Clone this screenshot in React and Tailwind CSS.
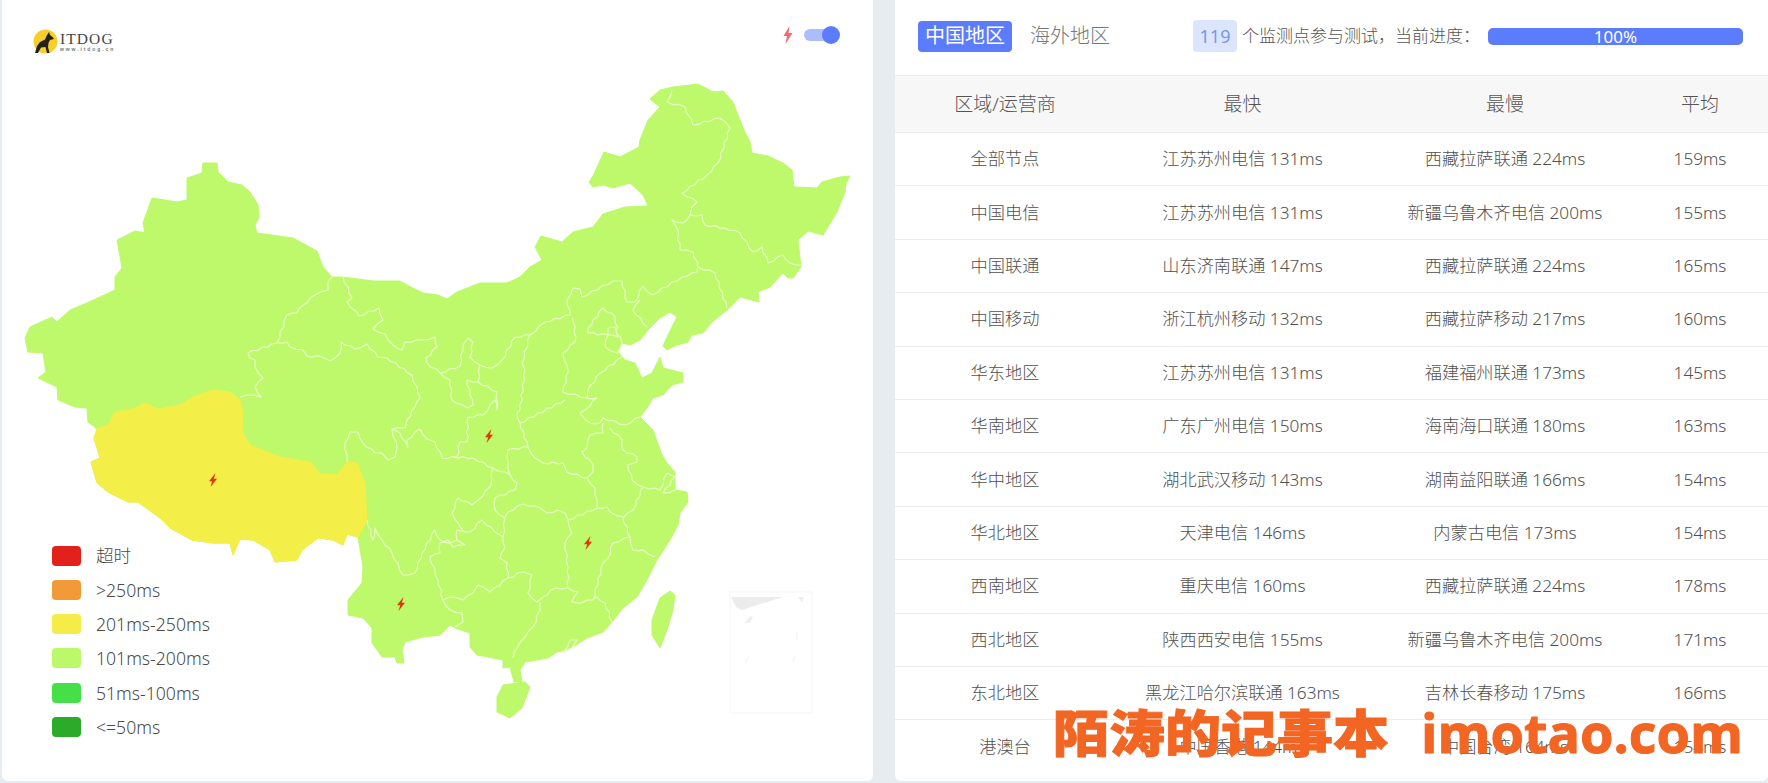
import React from "react";

const LEGEND = [
  { label: "超时", color: "bg-[#e3211c]" },
  { label: ">250ms", color: "bg-[#f39a38]" },
  { label: "201ms-250ms", color: "bg-[#f5ec48]" },
  { label: "101ms-200ms", color: "bg-[#bcf96a]" },
  { label: "51ms-100ms", color: "bg-[#45e047]" },
  { label: "<=50ms", color: "bg-[#2cab2a]" },
];

const ROWS = [
  ["全部节点", "江苏苏州电信 131ms", "西藏拉萨联通 224ms", "159ms"],
  ["中国电信", "江苏苏州电信 131ms", "新疆乌鲁木齐电信 200ms", "155ms"],
  ["中国联通", "山东济南联通 147ms", "西藏拉萨联通 224ms", "165ms"],
  ["中国移动", "浙江杭州移动 132ms", "西藏拉萨移动 217ms", "160ms"],
  ["华东地区", "江苏苏州电信 131ms", "福建福州联通 173ms", "145ms"],
  ["华南地区", "广东广州电信 150ms", "海南海口联通 180ms", "163ms"],
  ["华中地区", "湖北武汉移动 143ms", "湖南益阳联通 166ms", "154ms"],
  ["华北地区", "天津电信 146ms", "内蒙古电信 173ms", "154ms"],
  ["西南地区", "重庆电信 160ms", "西藏拉萨联通 224ms", "178ms"],
  ["西北地区", "陕西西安电信 155ms", "新疆乌鲁木齐电信 200ms", "171ms"],
  ["东北地区", "黑龙江哈尔滨联通 163ms", "吉林长春移动 175ms", "166ms"],
  ["港澳台", "中国香港 144ms", "中国台湾 164ms", "154ms"],
];

// mainland outline, clockwise from the top of Xinjiang
const MAINLAND =
  "203,163 217,163 218,172 228,182 242,185 250,192 258,205 259,218 255,225 257,233 293,238 317,251 323,267 332,277 343,277 373,281 400,281 407,285 423,293 438,295 447,299 457,292 480,283 507,283 520,277 530,267 542,260 535,247 541,236 562,242 573,232 593,227 603,214 625,207 648,206 643,195 630,183 613,188 603,185 593,187 589,182 593,176 604,152 620,157 639,147 640,140 648,120 660,107 650,99 660,90 673,87 698,84 713,92 723,91 733,102 743,128 750,142 752,153 768,156 783,163 792,170 794,187 817,188 822,182 840,177 850,176 846,183 845,192 837,212 823,235 808,231 798,240 801,267 793,278 788,278 783,273 770,287 758,292 759,302 740,297 727,310 712,322 703,333 692,335 688,342 677,345 667,350 663,346 667,337 677,317 670,312 660,318 648,330 640,340 630,345 622,343 618,352 625,360 635,363 642,378 652,373 660,357 663,368 683,373 683,382 672,385 663,395 653,398 647,408 640,417 653,430 662,455 667,463 675,472 675,490 687,492 688,502 680,513 678,525 670,540 657,560 647,580 637,597 623,608 612,622 603,632 587,638 568,650 557,652 548,658 525,662 520,670 522,682 514,682 510,667 503,668 503,660 477,655 470,647 470,633 455,628 450,625 440,635 423,637 405,642 402,650 404,663 397,663 395,657 382,657 372,643 372,628 363,618 348,615 348,600 362,583 363,567 358,537 347,534 343,545 333,540 318,538 302,550 297,560 275,562 270,550 253,540 240,539 233,555 230,543 213,543 192,540 170,528 160,518 138,502 128,502 108,492 97,483 91,462 100,458 94,438 97,429 88,422 87,408 75,407 58,400 57,387 38,378 46,372 43,353 28,352 25,338 30,327 52,317 57,322 70,310 87,303 115,290 115,277 122,268 117,240 135,231 145,233 143,223 152,198 177,202 187,200 187,178 202,173";

const XIZANG =
  "358,537 347,534 343,545 333,540 318,538 302,550 297,560 275,562 270,550 253,540 240,539 233,555 230,543 213,543 192,540 170,528 160,518 138,502 128,502 108,492 97,483 91,462 100,458 94,438 97,429 108,425 115,412 130,410 145,403 158,409 180,405 193,397 213,390 230,392 240,400 243,413 242,432 250,445 262,450 280,457 310,462 320,473 337,475 347,462 357,463 365,483 367,520";

const TAIWAN = "670,591 675,595 673,610 667,630 660,648 652,635 652,620 660,598";
const HAINAN = "503,685 525,682 530,687 522,708 510,718 497,712 497,697";

// province borders
const BORDERS = [
  "332,277 328,282 328,290 315,295 303,305 297,313 287,315 277,343 248,353 250,358 255,360 255,367 263,378 255,387 261,397 247,395 240,397",
  "277,343 287,342 290,347 303,350 307,356 322,357 330,361 340,353 341,342 355,349 367,344 378,357 387,358 412,375 418,393 420,398 415,407 407,420 405,428 392,429",
  "347,462 345,443 350,432 358,432 363,443 375,453 382,453 388,460 395,457 397,448 392,429 400,433 408,448 407,440 420,429 427,439 435,442 442,458 457,457 460,442 467,442 468,417 483,415 495,400",
  "343,277 352,298 347,302 359,316 379,308 383,320 373,329 385,334 393,345 402,350 405,342 423,340 435,337 437,347 426,358 427,363 440,373 460,366 463,345 468,338 473,342 470,357 480,365 492,368 502,360 515,337 530,335 545,322 570,315 567,300 573,288 580,289 582,297 613,281 622,281 627,302 635,302 643,286 652,295 682,277 697,272 698,267",
  "440,373 450,380 452,400 467,408 473,405 470,395 467,380 478,382 480,365",
  "478,382 497,392 497,410 495,400",
  "530,335 522,363 525,370 520,410 517,413 520,423 565,400",
  "572,318 575,327 575,342 563,353 568,372 563,392 587,398 597,398",
  "588,328 603,308 615,317 618,337 608,335 588,333 588,328",
  "608,335 605,347 617,353 622,343 615,327 608,328 608,335",
  "640,300 633,310 647,327",
  "698,267 715,273 727,308",
  "698,267 693,252 680,250 677,228 672,220 683,223 690,215 692,207 697,202 682,193 707,175 718,163 730,128 720,118 693,125 685,107 667,102 672,90",
  "690,215 702,215 705,225 725,228 740,233 753,252 762,247 768,263 783,255 790,263 801,265",
  "622,357 600,373 588,390 587,398 597,398 585,410 580,413 590,423 600,423 603,418 625,425 640,417",
  "520,423 528,447 535,458 543,463 563,463 567,472 587,478 595,488 597,507",
  "603,423 603,433 590,435 587,448 582,452 593,465 593,472 587,478",
  "610,428 622,440 623,450 637,457 637,462 628,465 632,480 643,487 660,490 667,473 675,477 663,493 675,490",
  "643,487 633,510 623,518 630,537 633,550 643,550 655,557",
  "568,520 597,508 607,507 610,512 623,517",
  "630,537 613,543 608,558 603,563 593,600",
  "568,520 572,533 565,543 568,567 568,588 578,592 572,602 577,603 592,600 597,597 605,603 612,622",
  "528,447 508,450 508,463 510,475 517,483 515,490 495,498 495,510 505,518 503,537 505,548 500,558 507,563 508,578",
  "505,517 508,512 523,504 540,508 547,513 558,510 565,513 568,520",
  "508,578 523,572 532,575 528,593 537,602 543,597 555,588 568,588",
  "540,602 540,610 533,627 525,637 517,648 513,658",
  "493,468 490,487 478,500 472,505 458,498 452,513 458,523 465,532 470,532 482,520 495,532 503,537",
  "453,457 473,458 493,468 510,475",
  "465,532 457,530 457,540 465,545 453,547 448,540 440,543 440,553 430,557 438,580 443,600 450,610 462,613 463,622 455,627",
  "508,578 490,592 478,585 473,593 463,600 450,597 443,600",
  "367,520 373,540 375,528 382,540 392,553 403,575 415,573 422,553 435,530 440,540 450,543 457,540",
  "563,653 570,640 577,640 572,648 563,653",
];

const BOLTS = [
  [213, 480],
  [489, 436],
  [588, 543],
  [401, 604],
];

// province lines are wobbly in the picture, so break up the long straight bits
function wobble(points) {
  const pts = points.split(" ").map((p) => p.split(",").map(Number));
  const out = [pts[0]];
  for (let i = 1; i < pts.length; i++) {
    const [x1, y1] = pts[i - 1];
    const [x2, y2] = pts[i];
    const len = Math.hypot(x2 - x1, y2 - y1);
    const steps = Math.floor(len / 5);
    for (let s = 1; s < steps; s++) {
      const t = s / steps;
      const off = s % 2 ? 0.9 : -0.9;
      out.push([x1 + (x2 - x1) * t - ((y2 - y1) / len) * off, y1 + (y2 - y1) * t + ((x2 - x1) / len) * off]);
    }
    out.push(pts[i]);
  }
  return out.map((p) => p.join(",")).join(" ");
}

function ChinaMap() {
  return (
    <svg viewBox="2 0 871 781" className="absolute left-0 top-0 w-[871px] h-[781px]">
      <g strokeLinejoin="round">
        <polygon points={MAINLAND} fill="#bdf96a" stroke="#bdf96a" strokeWidth="1" />
        <polygon points={TAIWAN} fill="#bdf96a" stroke="#bdf96a" strokeWidth="1" />
        <polygon points={HAINAN} fill="#bdf96a" stroke="#bdf96a" strokeWidth="1" />
        {BORDERS.map((b, i) => (
          <polyline key={i} points={wobble(b)} fill="none" stroke="#e9fcc6" strokeWidth="1.2" />
        ))}
        <polygon points={XIZANG} fill="#f4ef48" stroke="#f4ef48" strokeWidth="1" />
      </g>
      {BOLTS.map(([x, y]) => (
        <polygon
          key={x}
          transform={`translate(${x} ${y})`}
          points="2.5,-7 -4,1.2 -0.8,1.2 -2.5,7 4,-1.2 0.8,-1.2"
          fill="#e4350f"
        />
      ))}
      {/* south china sea inset */}
      <rect x="730" y="592" width="82" height="121" fill="none" stroke="#f9f9f9" strokeWidth="1.5" />
      <polygon points="731,597 783,597 760,604 742,610 736,607" fill="#ececec" />
      <polygon points="745,623 750,616 753,617 750,623" fill="#efefef" />
      <polygon points="798,597 804,597 802,603" fill="#efefef" />
      <polygon points="796,632 798,632 798,640 796,640" fill="#f7f7f7" />
      <polygon points="745,660 750,655 746,664" fill="#f7f7f7" />
      <polygon points="792,660 797,654 794,663" fill="#f7f7f7" />
    </svg>
  );
}

function Logo() {
  return (
    <div className="flex items-center gap-[2px]">
      <svg viewBox="0 0 25 25" className="w-[25px] h-[25px] shrink-0">
        <circle cx="12.5" cy="12.5" r="12" fill="#f7cf2a" />
        <polygon
          points="16,3 17,6 20,8.5 21,10 17,11 15.5,14 15,18 16.5,24 14,24 12.5,18 8,18.5 5,24 2,24 4,17 7,13 12,10.5 13.5,7"
          fill="#24201a"
        />
      </svg>
      <div className="flex flex-col leading-none text-[#444] font-['Liberation_Serif',serif]">
        <span className="text-[15.5px] font-normal tracking-[1.1px] leading-[15px]">ITDOG</span>
        <span className="text-[5px] font-bold tracking-[1.9px] leading-[7px] text-[#777] font-['Liberation_Sans',sans-serif]">www.itdog.cn</span>
      </div>
    </div>
  );
}

function MapPanel() {
  return (
    <div className="relative w-[871px] h-[781px] shrink-0 bg-white rounded-b-md flex flex-col justify-between pb-[44px] font-['Noto_Sans','Noto_Sans_CJK_SC',sans-serif]">
      <ChinaMap />
      <div className="relative flex items-start justify-between pl-[31px] pr-[33px] pt-[26px]">
        <div className="pt-[3px]">
          <Logo />
        </div>
        <div className="flex items-center gap-[11px]">
          <svg viewBox="0 0 10 18" className="w-[10px] h-[18px]">
            <polygon points="6.5,0 0.5,10 4,10 2.5,18 9.5,7 5.5,7" fill="#f36a72" />
          </svg>
          <div className="relative w-[36px] h-[18px] flex items-center">
            <div className="w-[30px] h-[12px] rounded-full bg-[#abbdfb]" />
            <div className="absolute right-0 top-0 w-[18px] h-[18px] rounded-full bg-[#5b7cfd]" />
          </div>
        </div>
      </div>
      <div className="relative flex flex-col gap-[14.3px] pl-[50px]">
        {LEGEND.map((l) => (
          <div key={l.label} className="flex items-center gap-[15px] h-[20px]">
            <div className={`w-[29px] h-[20px] rounded-[4px] ${l.color}`} />
            <span className="text-[17.6px] text-[#4a4a4a] font-light">{l.label}</span>
          </div>
        ))}
      </div>
    </div>
  );
}

function ResultPanel() {
  return (
    <div className="relative flex-1 h-[781px] bg-white rounded-b-md overflow-hidden font-['Noto_Sans','Noto_Sans_CJK_SC',sans-serif]">
      <div className="h-[75px] flex items-center pl-[23px] pr-[25px] pb-[3px]">
        <span className="w-[94px] h-[31px] rounded-[4px] bg-[#5b7cfd] text-white text-[20px] flex items-center justify-center">中国地区</span>
        <span className="ml-[18px] text-[20px] text-[#777] font-light">海外地区</span>
        <span className="ml-[83px] w-[44px] h-[32px] rounded-[4px] bg-[#dbe6fd] text-[#7d94e8] text-[18px] flex items-center justify-center">119</span>
        <span className="ml-[5px] text-[17px] text-[#555] font-light">个监测点参与测试，当前进度：</span>
        <div className="ml-[8px] flex-1 h-[17px] rounded-[5px] bg-[#5b7cfd] text-white text-[17px] leading-[17px] text-center">100%</div>
      </div>
      <div className="h-[58px] grid grid-cols-[220px_255px_270px_120px] items-center border-y border-[#ececec] bg-[#f7f7f7] text-[19px] text-[#555] text-center font-light">
        <span>区域/运营商</span>
        <span>最快</span>
        <span>最慢</span>
        <span>平均</span>
      </div>
      <div>
        {ROWS.map((r) => (
          <div key={r[0]} className="h-[53.4px] grid grid-cols-[220px_255px_270px_120px] items-center border-b border-[#ebeef0] last:border-b-0 text-[17.2px] text-[#4f4f4f] text-center font-light">
            {r.map((c, i) => (
              <span key={i}>{c}</span>
            ))}
          </div>
        ))}
      </div>
      <div className="absolute left-[158px] top-[704px] flex items-center gap-[32px] text-[#f26522] font-bold leading-none">
        <span className="text-[56px] font-black scale-y-90 [-webkit-text-stroke:1px_#f26522]">陌涛的记事本</span>
        <span className="text-[54px] font-['Open_Sans',sans-serif] font-bold [-webkit-text-stroke:1px_#f26522]">imotao.com</span>
      </div>
    </div>
  );
}

export default function App() {
  return (
    <div className="w-[1768px] h-[783px] overflow-hidden bg-[#e7ecf1] flex gap-[22px] pl-[2px]">
      <MapPanel />
      <ResultPanel />
    </div>
  );
}
